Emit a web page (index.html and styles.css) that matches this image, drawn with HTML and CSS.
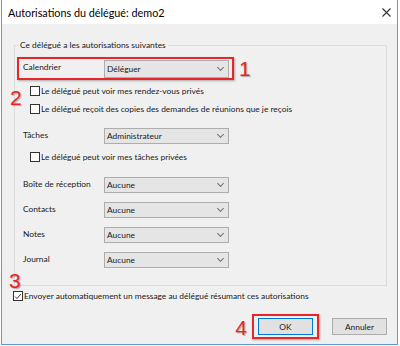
FILE: index.html
```html
<!DOCTYPE html>
<html lang="fr">
<head>
    <meta charset="UTF-8">
    <title>Autorisations du délégué</title>
    <link rel="stylesheet" href="styles.css">
</head>
<body>
    <div class="window">
        <div class="titlebar">
            <span class="title">Autorisations du délégué: demo2</span>
            <svg class="close" width="9" height="9" viewBox="0 0 9 9">
                <path d="M0.5 0.5 L8.5 8.5 M8.5 0.5 L0.5 8.5" stroke="#333" stroke-width="1.1" fill="none"/>
            </svg>
        </div>

        <div class="content">
            <fieldset class="group">
                <legend>Ce délégué a les autorisations suivantes</legend>

                <div class="callout">
                    <div class="mark-box">
                        <div class="field">
                            <span class="label">Calendrier</span>
                            <div class="select tall">Déléguer<span class="chev"></span></div>
                        </div>
                    </div>
                    <span class="mark">1</span>
                </div>

                <span class="mark mark-2">2</span>
                <label class="check"><span class="box"></span>Le délégué peut voir mes rendez-vous privés</label>
                <label class="check"><span class="box"></span>Le délégué reçoit des copies des demandes de réunions que je reçois</label>

                <div class="field row-taches">
                    <span class="label">Tâches</span>
                    <div class="select">Administrateur<span class="chev"></span></div>
                </div>
                <label class="check check-taches"><span class="box"></span>Le délégué peut voir mes tâches privées</label>

                <div class="field row-first">
                    <span class="label">Boîte de réception</span>
                    <div class="select">Aucune<span class="chev"></span></div>
                </div>
                <div class="field row">
                    <span class="label">Contacts</span>
                    <div class="select">Aucune<span class="chev"></span></div>
                </div>
                <div class="field row">
                    <span class="label">Notes</span>
                    <div class="select">Aucune<span class="chev"></span></div>
                </div>
                <div class="field row">
                    <span class="label">Journal</span>
                    <div class="select">Aucune<span class="chev"></span></div>
                </div>
            </fieldset>

            <span class="mark mark-3">3</span>
            <label class="check send">
                <span class="box">
                    <svg width="9" height="9" viewBox="0 0 9 9"><path d="M1.2 4.6 L3.4 6.8 L7.8 1.6" stroke="#333" stroke-width="1.1" fill="none"/></svg>
                </span>Envoyer automatiquement un message au délégué résumant ces autorisations
            </label>

            <div class="buttons">
                <span class="mark">4</span>
                <div class="mark-box btn-box">
                    <button class="btn default">OK</button>
                </div>
                <button class="btn">Annuler</button>
            </div>
        </div>
    </div>
</body>
</html>
```

FILE: styles.css
```css
body {
    margin: 0;
    background: #ffffff;
    font-family: Lato, 'Noto Sans', sans-serif;
    font-size: 8.4px;
    color: #1a1a1a;
}

.window {
    margin-left: 1px;
    width: 395px;
    height: 344px;
    border: 1px solid #5b9bd5;
    border-top: none;
    background: #f0f0f0;
    display: flex;
    flex-direction: column;
}

.titlebar {
    height: 24px;
    background: #ffffff;
    display: flex;
    align-items: center;
    justify-content: space-between;
    padding: 0 6px 0 6px;
}

.title {
    font-size: 10.8px;
    color: #000;
}

.close {
    margin-top: 1px;
}

.content {
    position: relative;
    padding: 15px 10px 0 12px;
}

.group {
    margin: 0;
    padding: 6px 0 17px 2px;
    border: 1px solid #dcdcdc;
    width: 369px;
    min-width: 0;
}

.group legend {
    padding: 0 2px;
    margin-left: 1px;
    line-height: 12px;
    color: #1a1a1a;
}

.callout {
    display: flex;
    align-items: center;
}

.mark-box {
    border: 2px solid #e8262a;
    box-shadow: 1px 1px 2px rgba(0, 0, 0, 0.3);
}

.callout .mark-box {
    padding: 1px 3px 1px 4px;
}

.field {
    display: flex;
    align-items: center;
    height: 17px;
}

.field .label {
    width: 81px;
    margin-top: -3px;
}

.row-taches,
.row-first,
.row {
    margin-left: 6px;
    height: 16px;
}

.row-taches {
    margin-top: 10px;
}

.row-first {
    margin-top: 11px;
}

.row {
    margin-top: 9px;
}

.select {
    box-sizing: border-box;
    width: 125px;
    height: 16px;
    border: 1px solid #adadad;
    background: #e5e5e5;
    display: flex;
    align-items: center;
    justify-content: space-between;
    padding: 0 5px 0 2px;
}

.select.tall {
    height: 18px;
}

.chev {
    width: 4px;
    height: 4px;
    border-right: 1px solid #707070;
    border-bottom: 1px solid #707070;
    transform: rotate(45deg);
    margin-top: -3px;
}

.check {
    display: flex;
    align-items: center;
    height: 18px;
    margin-left: 13px;
}

.callout + .mark-2 + .check {
    margin-top: 2px;
}

.check-taches {
    margin-top: 4px;
}

.box {
    box-sizing: border-box;
    width: 10px;
    height: 10px;
    border: 1px solid #333;
    background: #ffffff;
    margin-right: 1px;
    display: flex;
    align-items: center;
    justify-content: center;
}

.send {
    margin: 1px 0 0 -1px;
}

.mark {
    color: #e8262a;
    font-family: 'Liberation Sans', sans-serif;
    font-size: 21px;
    line-height: 20px;
    text-shadow: 1px 1px 1px rgba(0, 0, 0, 0.3);
    margin-left: 5px;
}

.mark-2 {
    position: absolute;
    left: 8px;
    top: 64px;
    margin: 0;
}

.mark-3 {
    position: absolute;
    left: 7px;
    top: 247px;
    margin: 0;
}

.buttons {
    display: flex;
    align-items: center;
    justify-content: flex-end;
    margin-top: 9px;
}

.buttons .mark {
    margin: 2px 5px 0 0;
}

.btn-box {
    padding: 2px 4px;
    margin-right: 13px;
}

.btn {
    box-sizing: border-box;
    width: 55px;
    height: 17px;
    margin: 0;
    padding: 0;
    font-family: Lato, 'Noto Sans', sans-serif;
    font-size: 8.4px;
    color: #1a1a1a;
    background: #e1e1e1;
    border: 1px solid #adadad;
}

.btn.default {
    border: 1px solid #0078d7;
}
```
